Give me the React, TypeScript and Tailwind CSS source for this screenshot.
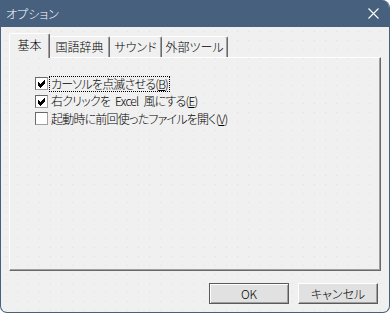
import React from 'react';

const FONT = "font-['Noto_Sans_CJK_JP','Liberation_Sans',sans-serif] [font-feature-settings:'palt'] font-light";

const tabs = ['基本', '国語辞典', 'サウンド', '外部ツール'];

function CheckBox({ checked }: { checked: boolean }) {
  return (
    <span className="flex h-[13px] w-[13px] shrink-0 items-center justify-center border border-t-[#696969] border-l-[#696969] border-r-[#a0a0a0] border-b-[#a0a0a0] bg-white">
      {checked && (
        <svg width="9" height="9" viewBox="0 0 9 9">
          <path d="M1 3.5 L3.5 6 L8 1.5 M1 4.5 L3.5 7 L8 2.5 M1 5.5 L3.5 8 L8 3.5" stroke="#000" strokeWidth="1" fill="none" shapeRendering="crispEdges" />
        </svg>
      )}
    </span>
  );
}

function Option({ checked, focus, children }: { checked: boolean; focus?: boolean; children: React.ReactNode }) {
  return (
    <div className="flex h-[17.5px] items-center gap-[2px]">
      <CheckBox checked={checked} />
      <span
        className={`px-[1px] leading-[14px] tracking-[-0.8px] ${focus ? 'outline outline-1 outline-dotted outline-black' : ''}`}
      >
        {children}
      </span>
    </div>
  );
}

const Gap = () => <span className="inline-block w-[5px]" />;

function Button({ label, isDefault }: { label: string; isDefault?: boolean }) {
  return (
    <button
      className={`flex h-[21px] w-[80px] items-center justify-center border bg-[#e1e1e1] text-[12px] text-black ${
        isDefault
          ? 'border-[#5a5a5a] shadow-[inset_1px_1px_0_#fff,inset_-1px_-1px_0_#a0a0a0]'
          : 'border-t-[#fff] border-l-[#fff] border-r-[#5a5a5a] border-b-[#5a5a5a] shadow-[inset_-1px_-1px_0_#a0a0a0]'
      }`}
    >
      {label}
    </button>
  );
}

export default function App() {
  return (
    <div
      className={`${FONT} flex h-[313px] w-[390px] flex-col overflow-hidden rounded-tr-[8px] rounded-b-[7px] border border-t-0 border-[#46607e] bg-[#f0f0f0] text-[12px] text-black`}
    >
      {/* title bar */}
      <div className="flex h-[27px] shrink-0 items-center justify-between bg-[#46607e] pl-[5px] pr-[10px] text-white">
        <span className="text-[12px] leading-none">オプション</span>
        <svg width="11" height="11" viewBox="0 0 11 11">
          <path d="M0.5 0.5 L10.5 10.5 M10.5 0.5 L0.5 10.5" stroke="#fff" strokeWidth="1.1" />
        </svg>
      </div>

      <div className="flex flex-1 flex-col bg-[radial-gradient(circle,#e0e0e0_0.6px,transparent_0.9px)] bg-[size:11px_9px] px-[8px] pt-[6px]">
        {/* tab strip */}
        <div className="flex h-[24px] items-end">
          {tabs.map((t, i) =>
            i === 0 ? (
              <div
                key={t}
                className="relative z-10 -mb-px flex h-[25px] w-[41px] items-center justify-center rounded-t-[2px] border-l border-t border-r border-l-white border-t-white border-r-[#696969] bg-[#f0f0f0] pb-[2px] shadow-[inset_-1px_0_0_#a0a0a0]"
              >
                {t}
              </div>
            ) : (
              <div
                key={t}
                className={`flex h-[21px] items-center justify-center rounded-t-[2px] border-t border-r border-t-white border-r-[#696969] bg-[#f0f0f0] shadow-[inset_-1px_0_0_#a0a0a0] ${
                  i === 1 ? 'w-[60px] px-[4px]' : i === 2 ? 'w-[52px]' : 'w-[66px]'
                }`}
              >
                {t}
              </div>
            )
          )}
        </div>

        {/* tab panel */}
        <div className="flex h-[214px] flex-col border border-t-white border-l-white border-r-[#696969] border-b-[#696969] pl-[25px] pt-[17px] shadow-[inset_-1px_-1px_0_#a0a0a0]">
          <Option checked focus>
            カーソルを点滅させる(<span className="underline">B</span>)
          </Option>
          <Option checked>
            右クリックを<Gap />Excel<Gap />風にする(<span className="underline">E</span>)
          </Option>
          <Option checked={false}>
            起動時に前回使ったファイルを開く(<span className="underline">V</span>)
          </Option>
        </div>

        {/* buttons */}
        <div className="mt-[12px] flex justify-end gap-[9px] pr-[3px]">
          <Button label="OK" isDefault />
          <Button label="キャンセル" />
        </div>
      </div>
    </div>
  );
}
